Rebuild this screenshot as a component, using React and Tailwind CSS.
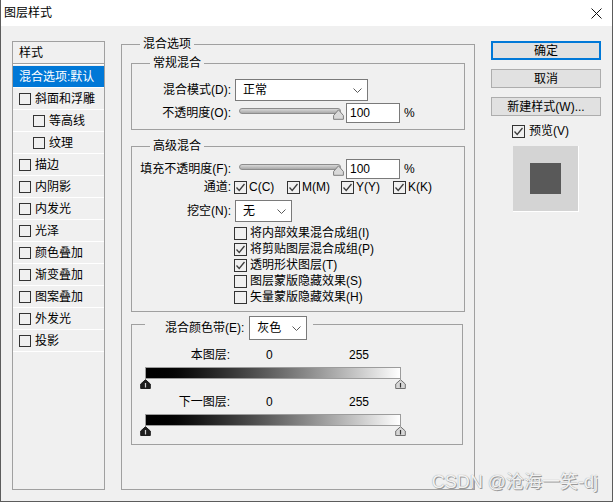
import React from 'react';

const FONT = { fontFamily: '"Liberation Sans", "Noto Sans CJK SC", sans-serif' };

function Check({ checked, size = 13 }) {
  return (
    <span
      className="inline-flex shrink-0 items-center justify-center border border-[#333333] bg-[#f0f0f0]"
      style={{ width: size, height: size }}
    >
      {checked && (
        <svg width="11" height="11" viewBox="0 0 11 11">
          <polyline points="1.5,5.5 4.2,8.5 9.5,2" fill="none" stroke="#3c3c3c" strokeWidth="1.3" />
        </svg>
      )}
    </span>
  );
}

function Chevron() {
  return (
    <svg width="9" height="5" viewBox="0 0 9 5" className="shrink-0">
      <polyline points="0.5,0.5 4.5,4.5 8.5,0.5" fill="none" stroke="#5a5a5a" strokeWidth="1" />
    </svg>
  );
}

function Select({ value, className }) {
  return (
    <div className={`flex items-center justify-between border border-[#7a7a7a] bg-white pl-[7px] pr-[5px] text-[12px] text-black ${className}`}>
      <span>{value}</span>
      <Chevron />
    </div>
  );
}

function NumBox() {
  return (
    <div className="flex h-[20px] w-[54px] items-center border border-[#7a7a7a] bg-white pl-[3px] text-[12px] leading-none text-black">
      100
    </div>
  );
}

function Slider() {
  return (
    <div className="relative h-[20px] w-[111px]">
      <div className="absolute left-[4px] top-[5px] h-[6px] w-[102px] rounded-full border border-[#8c8c8c] bg-gradient-to-b from-[#d8d8d8] to-[#a9a9a9]" />
      <svg className="absolute left-[98px] top-[6px]" width="11" height="11" viewBox="0 0 11 11">
        <path d="M5.5 0.8 L10.4 6.5 L10.4 10.3 L0.6 10.3 L0.6 6.5 Z" fill="#d9d9d9" stroke="#7d7d7d" strokeWidth="1" />
      </svg>
    </div>
  );
}

function Thumb({ dark, className }) {
  return (
    <svg className={className} width="11" height="10" viewBox="0 0 11 10">
      <path
        d="M5.5 0.7 L10.3 5 L10.3 9.5 L0.7 9.5 L0.7 5 Z"
        fill={dark ? '#1e1e1e' : '#d6d6d6'}
        stroke={dark ? '#1e1e1e' : '#707070'}
        strokeWidth="1"
      />
      <line x1="5.5" y1="4" x2="5.5" y2="8.5" stroke={dark ? '#d0d0d0' : '#333333'} strokeWidth="1.2" />
    </svg>
  );
}

function Band({ label }) {
  return (
    <div>
      <div className="flex h-[16px] items-center text-[12px] leading-[16px] text-black">
        <span className="w-[98px] text-right">{label}</span>
        <span className="ml-[36px] w-[83px]">0</span>
        <span>255</span>
      </div>
      <div className="ml-[13px] mt-[4px] h-[12px] w-[256px] border border-[#9c9c9c] bg-gradient-to-r from-black to-white" />
      <div className="relative ml-[8px] h-[10px] w-[267px]">
        <Thumb dark className="absolute left-0 top-0" />
        <Thumb className="absolute left-[255px] top-0" />
      </div>
    </div>
  );
}

const sideItems = [
  ['斜面和浮雕', false],
  ['等高线', true],
  ['纹理', true],
  ['描边', false],
  ['内阴影', false],
  ['内发光', false],
  ['光泽', false],
  ['颜色叠加', false],
  ['渐变叠加', false],
  ['图案叠加', false],
  ['外发光', false],
  ['投影', false],
];

const extraChecks = [
  ['将内部效果混合成组(I)', false],
  ['将剪贴图层混合成组(P)', true],
  ['透明形状图层(T)', true],
  ['图层蒙版隐藏效果(S)', false],
  ['矢量蒙版隐藏效果(H)', false],
];

function Sidebar() {
  return (
    <div className="mt-[5px] h-[449px] w-[93px] shrink-0 border border-[#a0a0a0] text-[12px] text-black">
      <div className="flex h-[22px] items-center border-b border-[#a0a0a0] pl-[6px]">样式</div>
      <div className="h-[2px] border-t border-white" />
      <div className="flex h-[22px] items-center border-b border-white bg-[#0078d7] pl-[6px] text-white">
        混合选项:默认
      </div>
      {sideItems.map(([name, indent]) => (
        <div
          key={name}
          className={`flex h-[22px] items-center gap-[4px] border-b border-white ${indent ? 'pl-[20px]' : 'pl-[6px]'}`}
        >
          <Check size={12} />
          <span>{name}</span>
        </div>
      ))}
    </div>
  );
}

export default function App() {
  return (
    <div
      className="relative flex h-[502px] w-[613px] flex-col overflow-hidden border-x border-b border-[#5c5c5c] bg-[#f0f0f0] text-black"
      style={FONT}
    >
      <div className="flex h-[26px] shrink-0 items-center justify-between bg-white pl-[3px] pr-[10px] text-[12px]">
        <span>图层样式</span>
        <svg width="11" height="11" viewBox="0 0 11 11">
          <path d="M0.5 0.5 L10.5 10.5 M10.5 0.5 L0.5 10.5" stroke="#111" strokeWidth="1" />
        </svg>
      </div>

      <div className="flex items-start pl-[11px] pt-[10px]">
        <Sidebar />

        <fieldset className="ml-[16px] h-[454px] w-[354px] shrink-0 border border-[#a0a0a0] px-[9px]">
          <legend className="ml-[9px] px-[3px] text-[12px] leading-[16px]">混合选项</legend>

          <fieldset className="mt-[3px] border border-[#a0a0a0] pb-[6px] pt-[8px]">
            <legend className="ml-[18px] px-[3px] text-[12px] leading-[16px]">常规混合</legend>
            <div className="flex h-[22px] items-center text-[12px]">
              <span className="w-[99px] text-right">混合模式(D):</span>
              <Select value="正常" className="ml-[4px] h-[22px] w-[133px]" />
            </div>
            <div className="mt-[2px] flex h-[20px] items-center text-[12px]">
              <span className="w-[99px] text-right">不透明度(O):</span>
              <div className="ml-[4px]">
                <Slider />
              </div>
              <NumBox />
              <span className="ml-[4px]">%</span>
            </div>
          </fieldset>

          <fieldset className="mt-[8px] border border-[#a0a0a0] pb-[6px] pt-[5px]">
            <legend className="ml-[18px] px-[3px] text-[12px] leading-[16px]">高级混合</legend>
            <div className="flex h-[20px] items-center text-[12px]">
              <span className="w-[99px] text-right">填充不透明度(F):</span>
              <div className="ml-[4px]">
                <Slider />
              </div>
              <NumBox />
              <span className="ml-[4px]">%</span>
            </div>
            <div className="mt-[1px] flex h-[14px] items-center text-[12px]">
              <span className="w-[99px] text-right">通道:</span>
              <div className="ml-[3px] flex">
                {[
                  ['C(C)', 'w-[53px]'],
                  ['M(M)', 'w-[54px]'],
                  ['Y(Y)', 'w-[52px]'],
                  ['K(K)', 'w-[50px]'],
                ].map(([t, w]) => (
                  <span key={t} className={`flex items-center gap-[2px] ${w}`}>
                    <Check checked />
                    <span>{t}</span>
                  </span>
                ))}
              </div>
            </div>
            <div className="mt-[6px] flex h-[22px] items-center text-[12px]">
              <span className="w-[99px] text-right">挖空(N):</span>
              <Select value="无" className="ml-[4px] h-[22px] w-[57px]" />
            </div>
            <div className="ml-[102px] mt-[3px] flex flex-col text-[12px]">
              {extraChecks.map(([t, c]) => (
                <div key={t} className="flex h-[16px] items-center gap-[3px]">
                  <Check checked={c} />
                  <span>{t}</span>
                </div>
              ))}
            </div>
          </fieldset>

          <fieldset className="mr-[2px] mt-[4px] border border-[#a0a0a0] pb-[8px] pt-[15px]">
            <legend className="ml-[13px] h-[16px] pl-[20px] pr-[6px] text-[12px]">
              <div className="flex h-[24px] items-center gap-[5px]">
                <span>混合颜色带(E):</span>
                <Select value="灰色" className="h-[24px] w-[58px]" />
              </div>
            </legend>
            <Band label="本图层:" />
            <div className="mt-[5px]">
              <Band label="下一图层:" />
            </div>
          </fieldset>
        </fieldset>

        <div className="ml-[16px] mt-[5px] flex w-[110px] shrink-0 flex-col text-[12px]">
          <div className="flex h-[19px] items-center justify-center border-2 border-[#0078d7] bg-[#e1e1e1]">确定</div>
          <div className="mt-[9px] flex h-[19px] items-center justify-center border border-[#adadad] bg-[#e1e1e1]">取消</div>
          <div className="mt-[9px] flex h-[19px] items-center justify-center border border-[#adadad] bg-[#e1e1e1]">
            新建样式(W)...
          </div>
          <div className="ml-[21px] mt-[8px] flex h-[14px] items-center gap-[4px]">
            <Check checked />
            <span>预览(V)</span>
          </div>
          <div className="ml-[22px] mt-[8px] flex h-[66px] w-[66px] items-center justify-center border-b border-r border-white bg-[#d4d4d4]">
            <div className="h-[31px] w-[31px] bg-[#595959]" />
          </div>
        </div>
      </div>

      <div className="absolute bottom-[9px] right-[14px] text-[18px] leading-[20px] text-[#f2f2f2] [text-shadow:1px_1px_0_#9a9a9a,0_0_1px_#8a8a8a]">
        CSDN @沧海一笑-dj
      </div>
    </div>
  );
}
